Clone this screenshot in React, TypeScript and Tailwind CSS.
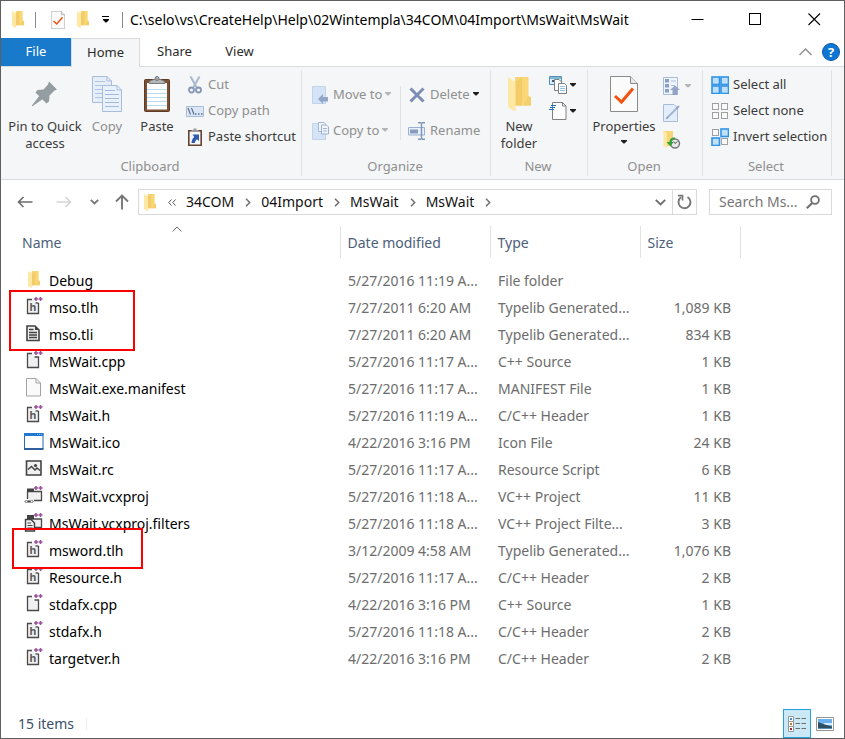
import React from 'react';

interface FileEntry {
  name: string;
  modified: string;
  type: string;
  size: string;
  icon: keyof typeof fileIcons;
}

interface IconProps {
  className?: string;
}

/* ---------- Shared icons ---------- */

const FolderIcon: React.FC<IconProps> = ({ className = 'w-3 h-[17px]' }) => (
  <svg viewBox="0 0 23 34" preserveAspectRatio="none" className={className} aria-hidden="true">
    <path d="M0 0H20.5V19L23 20.5V28.5H7V0Z" fill="#f9d777" />
    <path d="M7 5L14 0V28.5H7Z" fill="#f2cc66" />
    <path d="M15 28.5L20.5 19L23 20.5V28.5Z" fill="#f4cf6c" />
    <path d="M0 0L5 3.5L7.5 5V31L6 34L0 30Z" fill="#ffe8a3" />
    <path d="M7.5 31L6 34L9 33Z" fill="#f0e6cf" />
  </svg>
);

const Caret: React.FC<IconProps> = ({ className = 'text-[#1e1e1e]' }) => (
  <svg width="6" height="4" viewBox="0 0 6 4" className={className} aria-hidden="true">
    <path d="M0 0H6V1L3.5 3.5H2.5L0 1Z" fill="currentColor" />
  </svg>
);

const PropertiesIcon: React.FC<IconProps> = ({ className }) => (
  <svg viewBox="0 0 28 36" className={className} aria-hidden="true">
    <path d="M0.5 0.5H20.5L27.5 7.5V35.5H0.5Z" fill="#fbfbfb" stroke="#8b8b8b" />
    <path d="M20.5 0.5V7.5H27.5" fill="#e8e8e8" stroke="#8b8b8b" />
    <path d="M5 20L11.5 26L23 12.5" fill="none" stroke="#f1520f" strokeWidth="3" />
  </svg>
);

/* ---------- File icons ---------- */

const PlusPlus = () => (
  <path d="M8 2H12M10 0V4M12.5 2H16.5M14.5 0V4" stroke="#9a4f9c" strokeWidth="1.5" fill="none" />
);

const HeaderIcon = () => (
  <svg width="18" height="19" viewBox="0 0 18 19">
    <path d="M7 2.5H2.5V16.5H13.5V6" fill="#f0eff1" stroke="#4a4a4a" strokeWidth="1.3" />
    <path d="M10.5 6H13.5" stroke="#4a4a4a" strokeWidth="1.3" />
    <text x="4.5" y="13.5" fontSize="11" fontWeight="700" fontFamily="Liberation Sans, sans-serif" fill="#555">h</text>
    <g transform="translate(1 0)"><PlusPlus /></g>
  </svg>
);

const CppIcon = () => (
  <svg width="18" height="19" viewBox="0 0 18 19">
    <path d="M7 2.5H2.5V16.5H13.5V6H9.5" fill="#f0eff1" stroke="#4a4a4a" strokeWidth="1.3" />
    <g transform="translate(1 0)"><PlusPlus /></g>
  </svg>
);

const TextFileIcon = () => (
  <svg width="18" height="19" viewBox="0 0 18 19">
    <path d="M2 2H10L14 6V16.5H2Z" fill="#f0eff1" stroke="#424242" strokeWidth="1.6" />
    <path d="M10 2V6H14Z" fill="#424242" />
    <path d="M4 5.5H8.5M4 8.5H12M4 11H12M4 13.5H12" stroke="#424242" strokeWidth="1.3" />
  </svg>
);

const BlankIcon = () => (
  <svg width="18" height="19" viewBox="0 0 18 19">
    <path d="M1.5 0.5H11L15.5 5V18H1.5Z" fill="#fafafa" stroke="#a3a3a3" />
    <path d="M11 0.5V5H15.5" fill="none" stroke="#a3a3a3" />
  </svg>
);

const WindowIcon = () => (
  <svg width="20" height="17" viewBox="0 0 20 17">
    <path d="M0.5 0.5H19V16H0.5Z" fill="#fff" stroke="#2f68ae" />
    <path d="M0 1.5H19.5" stroke="#2178cf" strokeWidth="3" />
    <path d="M0 16H19.5" stroke="#2f5f9e" strokeWidth="2" />
    <path d="M13 1.5H18" stroke="#83b4e6" strokeDasharray="1 1" />
  </svg>
);

const ImageIcon = () => (
  <svg width="18" height="19" viewBox="0 0 18 19">
    <path d="M1.5 2H16V16H1.5Z" fill="#f0eff1" stroke="#424242" strokeWidth="1.6" />
    <path d="M3 10.5L6.5 7.5L10 11L12 9L15 11.5" fill="none" stroke="#424242" strokeWidth="1.5" />
    <circle cx="10.5" cy="6.5" r="1.6" fill="#424242" />
  </svg>
);

const ProjectIcon = () => (
  <svg width="20" height="19" viewBox="0 0 20 19">
    <path d="M3.500 13V5.500H17.500V14.500H10" fill="#f0eff1" stroke="#4a4a4a" strokeWidth="1.300" />
    <path d="M3 2.500H10V6H3Z" fill="#424242" />
    <path d="M2.500 14L1 15.500L2.500 17M7.500 14L9 15.500L7.500 17M3.500 15.500H6.500M4 14V17M6 14V17" fill="none" stroke="#424242" />
    <g transform="translate(2 0)"><PlusPlus /></g>
  </svg>
);

const FiltersIcon = () => (
  <svg width="20" height="19" viewBox="0 0 20 19">
    <path d="M10 14.5H17.5V6H4V14" fill="#f0eff1" stroke="#4a4a4a" strokeWidth="1.3" />
    <path d="M3 2H10V6H3Z" fill="#424242" />
    <path d="M1.5 6.5H7L10.5 10V18H1.5Z" fill="#f0eff1" stroke="#424242" strokeWidth="1.4" />
    <path d="M3.5 10H7M3.5 12.5H8.5M3.5 15H8.5" stroke="#424242" />
    <g transform="translate(2 0)"><PlusPlus /></g>
  </svg>
);

const FolderFileIcon = () => <FolderIcon />;

const fileIcons = {
  folder: FolderFileIcon,
  header: HeaderIcon,
  cpp: CppIcon,
  text: TextFileIcon,
  blank: BlankIcon,
  window: WindowIcon,
  image: ImageIcon,
  project: ProjectIcon,
  filters: FiltersIcon,
};

const files: FileEntry[] = [
  { name: 'Debug', modified: '5/27/2016 11:19 A...', type: 'File folder', size: '', icon: 'folder' },
  { name: 'mso.tlh', modified: '7/27/2011 6:20 AM', type: 'Typelib Generated...', size: '1,089 KB', icon: 'header' },
  { name: 'mso.tli', modified: '7/27/2011 6:20 AM', type: 'Typelib Generated...', size: '834 KB', icon: 'text' },
  { name: 'MsWait.cpp', modified: '5/27/2016 11:17 A...', type: 'C++ Source', size: '1 KB', icon: 'cpp' },
  { name: 'MsWait.exe.manifest', modified: '5/27/2016 11:17 A...', type: 'MANIFEST File', size: '1 KB', icon: 'blank' },
  { name: 'MsWait.h', modified: '5/27/2016 11:19 A...', type: 'C/C++ Header', size: '1 KB', icon: 'header' },
  { name: 'MsWait.ico', modified: '4/22/2016 3:16 PM', type: 'Icon File', size: '24 KB', icon: 'window' },
  { name: 'MsWait.rc', modified: '5/27/2016 11:17 A...', type: 'Resource Script', size: '6 KB', icon: 'image' },
  { name: 'MsWait.vcxproj', modified: '5/27/2016 11:18 A...', type: 'VC++ Project', size: '11 KB', icon: 'project' },
  { name: 'MsWait.vcxproj.filters', modified: '5/27/2016 11:18 A...', type: 'VC++ Project Filte...', size: '3 KB', icon: 'filters' },
  { name: 'msword.tlh', modified: '3/12/2009 4:58 AM', type: 'Typelib Generated...', size: '1,076 KB', icon: 'header' },
  { name: 'Resource.h', modified: '5/27/2016 11:17 A...', type: 'C/C++ Header', size: '2 KB', icon: 'header' },
  { name: 'stdafx.cpp', modified: '4/22/2016 3:16 PM', type: 'C++ Source', size: '1 KB', icon: 'cpp' },
  { name: 'stdafx.h', modified: '5/27/2016 11:18 A...', type: 'C/C++ Header', size: '2 KB', icon: 'header' },
  { name: 'targetver.h', modified: '4/22/2016 3:16 PM', type: 'C/C++ Header', size: '2 KB', icon: 'header' },
];

/* ---------- Title bar ---------- */

const TitleBar = () => (
  <header className="flex h-[37px] shrink-0 items-center bg-white">
    <FolderIcon className="ml-[11px] h-[17px] w-3 shrink-0" />
    <div className="ml-[11px] h-4 w-px shrink-0 bg-[#8a8a8a]" />
    <button aria-label="Properties" className="ml-[15px] shrink-0">
      <PropertiesIcon className="h-[18px] w-[14px]" />
    </button>
    <button aria-label="New folder" className="ml-3 shrink-0">
      <FolderIcon className="h-[17px] w-3" />
    </button>
    <button aria-label="Customize Quick Access Toolbar" className="ml-[13px] flex shrink-0 flex-col items-center gap-[2px]">
      <span className="block h-px w-[7px] bg-black" />
      <Caret className="text-black" />
    </button>
    <div className="ml-[13px] h-4 w-px shrink-0 bg-[#8a8a8a]" />
    <h1 className="ml-[7px] min-w-0 flex-1 truncate text-sm text-black">
      C:\selo\vs\CreateHelp\Help\02Wintempla\34COM\04Import\MsWait\MsWait
    </h1>
    <button aria-label="Minimize" className="flex h-full w-[58px] shrink-0 items-center justify-center">
      <svg width="13" height="13" viewBox="0 0 13 13"><path d="M0.5 6.5H12.5" stroke="#000" /></svg>
    </button>
    <button aria-label="Maximize" className="flex h-full w-[58px] shrink-0 items-center justify-center">
      <svg width="13" height="13" viewBox="0 0 13 13"><path d="M0.5 0.5H11.5V11.5H0.5Z" fill="none" stroke="#000" shapeRendering="crispEdges" /></svg>
    </button>
    <button aria-label="Close" className="flex h-full w-[60px] shrink-0 items-center justify-center">
      <svg width="13" height="13" viewBox="0 0 13 13"><path d="M0.5 0.5L12 12M12 0.5L0.5 12" stroke="#000" strokeWidth="1.1" /></svg>
    </button>
  </header>
);

const Tabs = () => (
  <nav className="flex h-[29px] shrink-0 border-b border-[#dadbdc] bg-white text-[13px]">
    <button className="h-7 w-[70px] bg-[#1979ca] text-white">File</button>
    <button className="-mb-px h-[29px] w-[69px] border border-b-0 border-[#dadbdc] bg-[#f5f6f7] text-[#2b2b2b]">Home</button>
    <button className="w-[69px] text-[#2b2b2b]">Share</button>
    <button className="w-[61px] text-[#2b2b2b]">View</button>
    <div className="flex-1" />
    <button aria-label="Minimize the Ribbon" className="mr-[10px]">
      <svg width="13" height="8" viewBox="0 0 13 8"><path d="M0.5 7L6.5 1L12.5 7" fill="none" stroke="#929292" strokeWidth="1.5" /></svg>
    </button>
    <button aria-label="Help" className="mr-1">
      <svg width="18" height="18" viewBox="0 0 18 18">
        <circle cx="9" cy="9" r="8.5" fill="#0f76d4" stroke="#0b5cab" />
        <text x="9" y="14" textAnchor="middle" fontSize="13" fontWeight="700" fontFamily="Open Sans, sans-serif" fill="#fff">?</text>
      </svg>
    </button>
  </nav>
);

/* ---------- Ribbon ---------- */

interface GroupProps {
  label: string;
  className: string;
  children: React.ReactNode;
}

const RibbonGroup: React.FC<GroupProps> = ({ label, className, children }) => (
  <section className={`my-[3px] flex shrink-0 flex-col border-r border-[#e0e1e2] ${className}`}>
    <div className="flex h-[90px] items-start">{children}</div>
    <h2 className="pr-[2px] text-center leading-5 text-[#8f8f8f]">{label}</h2>
  </section>
);

interface LargeButtonProps {
  label: string;
  icon: React.ReactNode;
  className: string;
  caret?: boolean;
}

const LargeButton: React.FC<LargeButtonProps> = ({ label, icon, className, caret }) => (
  <button className={`flex shrink-0 flex-col items-center pt-[5px] leading-[17px] ${className}`}>
    <span className="flex h-[38px] items-center">{icon}</span>
    <span className="mt-[5px]">{label}</span>
    {caret && <span className="mt-[5px] flex"><Caret /></span>}
  </button>
);

interface SmallButtonProps {
  label: string;
  icon: React.ReactNode;
  disabled?: boolean;
  caret?: string;
}

const SmallButton: React.FC<SmallButtonProps> = ({ label, icon, disabled, caret }) => (
  <button className={`flex h-[26px] items-center whitespace-nowrap ${disabled ? 'text-[#8f8f8f]' : ''}`}>
    <span className="mr-1 flex w-[18px] justify-center">{icon}</span>
    {label}
    {caret && <span className="ml-[3px] pb-[2px]"><Caret className={caret} /></span>}
  </button>
);

const PinIcon = () => (
  <svg width="26" height="26" viewBox="0 0 26 26">
    <path d="M0 25L8.5 14L11.5 17Z" fill="#949da2" stroke="#949da2" />
    <path d="M17 0.5L25 8.5L22.5 9.5L17.5 14.5L17 20.5L14.5 22.5L3.5 11.5L5.5 9L11.5 8.5L16 3.5Z" fill="#949da2" />
  </svg>
);

const CopyIcon = () => (
  <svg width="30" height="36" viewBox="0 0 30 36">
    <path d="M0.5 0.5H15L19.5 5V26.5H0.5Z" fill="#e6eefa" stroke="#a9bcda" />
    <path d="M3 5.5H13M3 9.5H17M3 13.5H17M3 17.5H17M3 21.5H17" stroke="#b2c4de" />
    <path d="M15 0.5V5H19.5" fill="none" stroke="#a9bcda" />
    <path d="M10.5 9.5H25L29.5 14V35.5H10.5Z" fill="#e9f1fc" stroke="#a9bcda" />
    <path d="M25 9.5V14H29.5" fill="none" stroke="#a9bcda" />
    <path d="M13 14.5H23M13 18.5H27M13 22.5H27M13 26.5H27M13 30.5H27" stroke="#a4b8d8" />
  </svg>
);

const PasteIcon = () => (
  <svg width="26" height="36" viewBox="0 0 26 36">
    <rect x="0.5" y="3.5" width="25" height="32" rx="1" fill="#7b5035" stroke="#5f3b25" />
    <path d="M3 7H23V33.5H3Z" fill="#fff" />
    <path d="M3 13.5H23M3 17.5H23M3 21.5H23M3 25.5H23M3 29.5H23" stroke="#b9dcf0" />
    <path d="M5 7.5C5 4 9 4.5 9.5 3.5H16.5C17 4.5 21 4 21 7.5Z" fill="#b5b7b9" stroke="#7c7f82" />
    <circle cx="13" cy="2.5" r="2" fill="#a7a9ab" stroke="#777a7d" />
  </svg>
);

const ScissorsIcon = () => (
  <svg width="14" height="18" viewBox="0 0 14 18">
    <path d="M2.5 0.5L8.5 11M11.5 0.5L5.5 11" stroke="#a9b8cf" strokeWidth="2" fill="none" />
    <circle cx="3.5" cy="14" r="2.5" fill="none" stroke="#8496b6" strokeWidth="1.8" />
    <circle cx="10.5" cy="14" r="2.5" fill="none" stroke="#8496b6" strokeWidth="1.8" />
  </svg>
);

const CopyPathIcon = () => (
  <svg width="18" height="11" viewBox="0 0 18 11">
    <path d="M0.5 0.5H17.5V10.5H0.5Z" fill="#dce7f5" stroke="#a9bcd8" />
    <path d="M2 2L4.5 8.5M5.5 2L8 8.5" stroke="#5f7295" strokeWidth="1.2" />
    <path d="M9 8H10.5M12 8H13.5M15 8H16.5" stroke="#5f7295" strokeWidth="1.5" />
  </svg>
);

const PasteShortcutIcon = () => (
  <svg width="14" height="18" viewBox="0 0 14 18">
    <path d="M0.8 2.8H13.2V17.2H0.8Z" fill="#f4f8fc" stroke="#65432d" strokeWidth="1.6" />
    <path d="M3.5 3.5V2H5.5V0.5H8.5V2H10.5V3.5Z" fill="#9a9da0" />
    <path d="M4.5 6.5H11V13L9 11.3C7.7 12.2 7 13.5 7 15H3.5C3.5 13 4.5 10.500 6.200 8.800Z" fill="#2e5cab" />
  </svg>
);

const MoveToIcon = () => (
  <svg width="17" height="18" viewBox="0 0 17 18">
    <path d="M0.5 0.5H13.5V17.5H0.5Z" fill="#d4e4f6" stroke="#c0d4ec" />
    <path d="M6 13L11 8V11H16V15.5H11V18Z" fill="#93a5c6" />
  </svg>
);

const CopyToIcon = () => (
  <svg width="17" height="18" viewBox="0 0 17 18">
    <path d="M0.5 1.5H13.5V17.5H0.5Z" fill="#d4e4f6" stroke="#c0d4ec" />
    <path d="M6.5 0.5H12L13.5 2V9.5H6.5Z" fill="#f2f6fc" stroke="#a3b6d5" />
    <path d="M9.5 3H14.5L16.5 5V12H9.5Z" fill="#f2f6fc" stroke="#9eb0cf" />
    <path d="M11 6.5H15M11 9H15" stroke="#9eb0cf" />
  </svg>
);

const DeleteIcon = () => (
  <svg width="16" height="16" viewBox="0 0 16 16">
    <path d="M1.5 1.5L14.5 14.5M14.5 1.5L1.5 14.5" stroke="#7e8db4" strokeWidth="3" />
  </svg>
);

const RenameIcon = () => (
  <svg width="18" height="18" viewBox="0 0 18 18">
    <path d="M0.5 5.5H16.5V13H0.5Z" fill="#e9f0fa" stroke="#9bb0d2" />
    <path d="M2 7.5H10V11.5H2Z" fill="#889cc0" />
    <path d="M13.5 1V17M10 0.8H12.5L13.5 1.5L14.5 0.8H17M10 17.2H12.5L13.5 16.5L14.5 17.2H17" stroke="#7e93b8" strokeWidth="1.4" fill="none" />
  </svg>
);

const NewItemIcon = () => (
  <svg width="18" height="18" viewBox="0 0 18 18">
    <path d="M0.5 0.5H12.5V8.5H0.5Z" fill="#d7edf9" stroke="#5590b0" />
    <path d="M1 1H12V3H1Z" fill="#7fb8d6" />
    <path d="M3 4H5V6H3Z" fill="#44596b" />
    <path d="M5.5 3.5H10L12.5 6V14.5H5.5Z" fill="#fff" stroke="#808080" />
    <path d="M9.5 7.5H15.5L17.5 9.5V17.5H9.5Z" fill="#fff" stroke="#808080" />
    <path d="M11 10.5H16M11 12.5H16M11 14.5H16" stroke="#8fc4ea" />
  </svg>
);

const EasyAccessIcon = () => (
  <svg width="18" height="18" viewBox="0 0 18 18">
    <path d="M3.5 0.5H13.5L17 4V17.5H3.5Z" fill="#fff" stroke="#808080" />
    <path d="M13.5 0.5V4H17" fill="none" stroke="#808080" />
    <path d="M2 3.5H7M1 5.5H6M0 7.5H5" stroke="#1d70bd" strokeWidth="1.2" />
  </svg>
);

const OpenWithIcon = () => (
  <svg width="18" height="18" viewBox="0 0 18 18">
    <path d="M0.5 0.5H14.5V17.5H0.5Z" fill="#eef4fc" stroke="#a9bcda" />
    <path d="M2 2H6V5.5H2ZM2 7H6V10.5H2ZM2 12H6V15.5H2Z" fill="#8ca0c3" />
    <path d="M8 4H13M8 8.5H12" stroke="#a9bcda" />
    <path d="M12 8.5L17 13H14.5V18H9.5V13H7Z" fill="#93a5c6" />
  </svg>
);

const EditIcon = () => (
  <svg width="17" height="18" viewBox="0 0 17 18">
    <path d="M0.5 0.5H11L14.5 4V17.5H0.5Z" fill="#e4eefb" stroke="#a9bcda" />
    <path d="M4.5 13.5L14 4" stroke="#a3b5d3" strokeWidth="2" />
    <path d="M2.5 15.5L4 12.5L5.5 14Z" fill="#7d92b5" />
    <path d="M13.5 4.5L16 2" stroke="#8fa3c6" strokeWidth="2" />
  </svg>
);

const HistoryIcon = () => (
  <svg width="18" height="18" viewBox="0 0 18 18">
    <path d="M0.5 0H10V15H3Z" fill="#f8d678" />
    <path d="M0.5 0L4 2V17L0.5 15Z" fill="#ffe8a3" />
    <circle cx="12" cy="12.5" r="4.5" fill="#e8e8e8" stroke="#777" strokeWidth="1.4" />
    <path d="M10.5 10.5L12 12.5L14.5 10.5" stroke="#555" fill="none" />
    <path d="M12 6.5C8.5 6 6.5 8 6.5 11H3.5L7.5 15.5L10.5 11H8.5C8.5 9.5 10 8 12 7.8Z" fill="#32a23b" />
  </svg>
);

const SelectIcon: React.FC<{ filled: boolean[] }> = ({ filled }) => (
  <svg width="18" height="18" viewBox="0 0 18 18">
    {filled.map((on, i) => (
      <rect
        key={i}
        x={(i % 2) * 9 + (on ? 1 : 1.5)}
        y={Math.floor(i / 2) * 9 + (on ? 1 : 1.5)}
        width={on ? 7.5 : 6}
        height={on ? 7.5 : 6}
        fill={on ? '#bfe0fb' : '#fafafa'}
        stroke={on ? '#2f93e6' : '#a0a0a0'}
        strokeWidth={on ? 1.6 : 1}
      />
    ))}
  </svg>
);

const Ribbon = () => (
  <div className="flex h-[113px] shrink-0 overflow-hidden border-b border-[#dadbdc] bg-[#f5f6f7] text-[13px] text-[#3b3b3b]">
    <RibbonGroup label="Clipboard" className="w-[301px]">
      <LargeButton label="Pin to Quick access" icon={<PinIcon />} className="ml-[5px] w-[78px]" />
      <LargeButton label="Copy" icon={<CopyIcon />} className="w-[46px] text-[#8f8f8f]" />
      <LargeButton label="Paste" icon={<PasteIcon />} className="w-[54px]" />
      <div className="ml-[2px] flex flex-col pt-[2px]">
        <SmallButton label="Cut" icon={<ScissorsIcon />} disabled />
        <SmallButton label="Copy path" icon={<CopyPathIcon />} disabled />
        <SmallButton label="Paste shortcut" icon={<PasteShortcutIcon />} />
      </div>
    </RibbonGroup>

    <RibbonGroup label="Organize" className="w-[189px]">
      <div className="ml-[9px] flex w-[89px] flex-col gap-[10px] pt-3">
        <SmallButton label="Move to" icon={<MoveToIcon />} disabled caret="text-[#b5b5b5]" />
        <SmallButton label="Copy to" icon={<CopyToIcon />} disabled caret="text-[#b5b5b5]" />
      </div>
      <div className="mt-4 h-[54px] w-px bg-[#e0e1e2]" />
      <div className="ml-[7px] flex flex-col gap-[10px] pt-3">
        <SmallButton label="Delete" icon={<DeleteIcon />} disabled caret="text-[#1e1e1e]" />
        <SmallButton label="Rename" icon={<RenameIcon />} disabled />
      </div>
    </RibbonGroup>

    <RibbonGroup label="New" className="w-[97px]">
      <LargeButton label="New folder" icon={<FolderIcon className="h-[34px] w-[23px]" />} className="ml-[3px] w-[50px]" />
      <div className="ml-[5px] flex flex-col pt-[2px]">
        <button aria-label="New item" className="flex h-[26px] items-center gap-[3px]"><NewItemIcon /><Caret /></button>
        <button aria-label="Easy access" className="flex h-[26px] items-center gap-[3px]"><EasyAccessIcon /><Caret /></button>
      </div>
    </RibbonGroup>

    <RibbonGroup label="Open" className="w-[115px]">
      <LargeButton label="Properties" icon={<PropertiesIcon className="h-9 w-7" />} className="w-[72px]" caret />
      <div className="ml-[3px] flex flex-col pt-[2px]">
        <button aria-label="Open" className="flex h-[27px] items-center gap-1"><OpenWithIcon /><Caret className="text-[#b5b5b5]" /></button>
        <button aria-label="Edit" className="flex h-[27px] items-center"><EditIcon /></button>
        <button aria-label="History" className="flex h-[27px] items-center"><HistoryIcon /></button>
      </div>
    </RibbonGroup>

    <RibbonGroup label="Select" className="w-[129px]">
      <div className="ml-2 flex flex-col pt-[2px]">
        <SmallButton label="Select all" icon={<SelectIcon filled={[true, true, true, true]} />} />
        <SmallButton label="Select none" icon={<SelectIcon filled={[false, false, false, false]} />} />
        <SmallButton label="Invert selection" icon={<SelectIcon filled={[false, true, true, false]} />} />
      </div>
    </RibbonGroup>
  </div>
);

/* ---------- Address bar ---------- */

const crumbs = ['34COM', '04Import', 'MsWait', 'MsWait'];

const AddressBar = () => (
  <div className="flex shrink-0 items-center pt-[9px] pr-3 pl-4 text-sm">
    <button aria-label="Back">
      <svg width="16" height="12" viewBox="0 0 16 12"><path d="M15.5 6H1.5M6.5 1L1.5 6L6.5 11" fill="none" stroke="#6d6d6d" strokeWidth="1.6" /></svg>
    </button>
    <button aria-label="Forward" className="ml-[23px]">
      <svg width="16" height="12" viewBox="0 0 16 12"><path d="M0.5 6H14.5M9.5 1L14.5 6L9.5 11" fill="none" stroke="#d4d4d4" strokeWidth="1.6" /></svg>
    </button>
    <button aria-label="Recent locations" className="ml-[18px]">
      <svg width="9" height="6" viewBox="0 0 9 6"><path d="M0.8 0.8L4.5 4.5L8.2 0.8" fill="none" stroke="#777" strokeWidth="1.8" /></svg>
    </button>
    <button aria-label="Up" className="ml-4">
      <svg width="14" height="16" viewBox="0 0 14 16"><path d="M7 15.5V1.5M1 7.5L7 1.5L13 7.5" fill="none" stroke="#777" strokeWidth="1.9" /></svg>
    </button>
    <div className="ml-[9px] flex h-[26px] min-w-0 flex-1 items-center border border-[#d9d9d9] pl-[5px]">
      <FolderIcon className="h-[17px] w-3 shrink-0" />
      <button aria-label="Show hidden locations" className="mr-[10px] ml-3">
        <svg width="8" height="7" viewBox="0 0 8 7"><path d="M3.5 0.5L0.8 3.5L3.5 6.5M7.5 0.5L4.8 3.5L7.5 6.5" fill="none" stroke="#555" /></svg>
      </button>
      {crumbs.map((crumb, index) => (
        <React.Fragment key={index}>
          <button className="text-[#111]">{crumb}</button>
          <svg width="6" height="9" viewBox="0 0 6 9" className="mr-[10px] ml-[11px] shrink-0"><path d="M1 0.8L4.7 4.5L1 8.2" fill="none" stroke="#6f6f6f" strokeWidth="1.5" /></svg>
        </React.Fragment>
      ))}
      <div className="flex-1" />
      <button aria-label="Previous locations" className="mr-[6px]">
        <svg width="11" height="7" viewBox="0 0 11 7"><path d="M0.8 0.8L5.5 5.5L10.2 0.8" fill="none" stroke="#6d6d6d" strokeWidth="1.9" /></svg>
      </button>
      <button aria-label="Refresh" className="flex h-full w-6 items-center justify-center border-l border-[#d9d9d9]">
        <svg width="15" height="16" viewBox="0 0 15 16">
          <path d="M4 3.3A6 6 0 1 0 10.5 3" fill="none" stroke="#777" strokeWidth="1.9" />
          <path d="M1 1.7H5.5V6.5" fill="none" stroke="#777" strokeWidth="1.7" />
        </svg>
      </button>
    </div>
    <label className="ml-3 flex h-[26px] w-[123px] items-center border border-[#d9d9d9] pr-[11px] pl-[9px]">
      <input type="text" aria-label="Search" placeholder="Search Ms..." className="w-0 min-w-0 flex-1 text-sm outline-none placeholder:text-[#767676]" />
      <svg width="14" height="14" viewBox="0 0 14 14" className="shrink-0">
        <circle cx="9" cy="5" r="3.9" fill="none" stroke="#707070" strokeWidth="1.8" />
        <path d="M6.2 8L0.8 13.2" stroke="#707070" strokeWidth="2.2" />
      </svg>
    </label>
  </div>
);

/* ---------- File list ---------- */

const FileTable = () => (
  <main className="relative flex-1 overflow-hidden pt-[11px]">
    <table className="w-full table-fixed border-collapse text-sm text-[#6d6d6d]">
      <colgroup>
        <col />
        <col className="w-[150px]" />
        <col className="w-[150px]" />
        <col className="w-[100px]" />
        <col className="w-[104px]" />
      </colgroup>
      <thead>
        <tr className="h-8 text-left text-[#4c607a] [&>th]:border-r [&>th]:border-[#e2e2e2] [&>th]:font-normal">
          <th className="relative pt-[2px] pl-[21px]">
            Name
            <svg width="10" height="6" viewBox="0 0 10 6" className="absolute top-0 left-1/2 ml-[2px]" aria-hidden="true">
              <path d="M0.5 5.5L5 1L9.5 5.5" fill="none" stroke="#6d6d6d" />
            </svg>
          </th>
          <th className="pt-[2px] pl-[7px]">Date modified</th>
          <th className="pt-[2px] pl-[7px]">Type</th>
          <th className="pt-[2px] pl-[7px]">Size</th>
          <td />
        </tr>
      </thead>
      <tbody>
        <tr className="h-[9px]" aria-hidden="true"><td /></tr>
        {files.map((file) => {
          const Icon = fileIcons[file.icon];
          return (
            <tr key={file.name} className="h-[27px] whitespace-nowrap *:p-0">
              <td>
                <div className="flex items-center pl-[22px] text-black">
                  <span className="mr-[4px] flex w-[22px] shrink-0 justify-center pb-[3px]">
                    <Icon />
                  </span>
                  {file.name}
                </div>
              </td>
              <td><div className="pl-2">{file.modified}</div></td>
              <td><div className="pl-2">{file.type}</div></td>
              <td><div className="pr-[9px] text-right">{file.size}</div></td>
              <td />
            </tr>
          );
        })}
      </tbody>
    </table>

    {/* Highlight frames around the generated type library files */}
    <div className="pointer-events-none absolute top-[75px] left-2 h-[61px] w-[126px] border-2 border-[#fb0000]" />
    <div className="pointer-events-none absolute top-[313px] left-[11px] h-[41px] w-[131px] border-2 border-[#fb0000]" />
  </main>
);

const StatusBar = () => (
  <footer className="flex h-[29px] shrink-0 items-center pl-[17px] text-sm text-[#3b4f6b]">
    <span>15 items</span>
    <div className="ml-3 h-3 w-px bg-[#ececec]" />
    <div className="flex-1" />
    <button aria-label="Details" className="flex h-[29px] w-7 items-center justify-center border border-[#26a0da] bg-[#cbe8f6]">
      <svg width="18" height="16" viewBox="0 0 18 16">
        <path d="M0.5 0.5H5.5V5.5H0.5ZM0.5 5.5H5.5V10.5H0.5ZM0.5 10.5H5.5V15.5H0.5Z" fill="#fff" stroke="#959595" />
        <path d="M2 2H4V4H2Z" fill="#3d8fd4" />
        <path d="M2 7H4V9H2Z" fill="#b57a3c" />
        <path d="M2 12H4V14H2Z" fill="#a02d22" />
        <path d="M7.5 2.5H12M13.5 2.5H18M7.5 7.5H12M13.5 7.5H18M7.5 12.5H12M13.5 12.5H18" stroke="#6e6e6e" />
      </svg>
    </button>
    <button aria-label="Large icons" className="mr-[10px] ml-[5px]">
      <svg width="18" height="14" viewBox="0 0 18 14">
        <path d="M0.5 0.5H17.5V13.5H0.5Z" fill="#fff" stroke="#959595" />
        <path d="M2 2H16V12H2Z" fill="#6bb1ee" />
        <path d="M8 6H16V8H8Z" fill="#d9ecf8" />
        <path d="M2 5L7 7L16 9.5V12H2Z" fill="#2f5063" />
        <path d="M2 11H16V12H2Z" fill="#5d8fb6" />
      </svg>
    </button>
  </footer>
);

const App: React.FC = () => {
  return (
    <div className="flex min-h-screen flex-col border border-[#5f5f5f] bg-white font-['Noto_Sans','Open_Sans',sans-serif]">
      <TitleBar />
      <Tabs />
      <Ribbon />
      <AddressBar />
      <FileTable />
      <StatusBar />
    </div>
  );
};

export default App;
